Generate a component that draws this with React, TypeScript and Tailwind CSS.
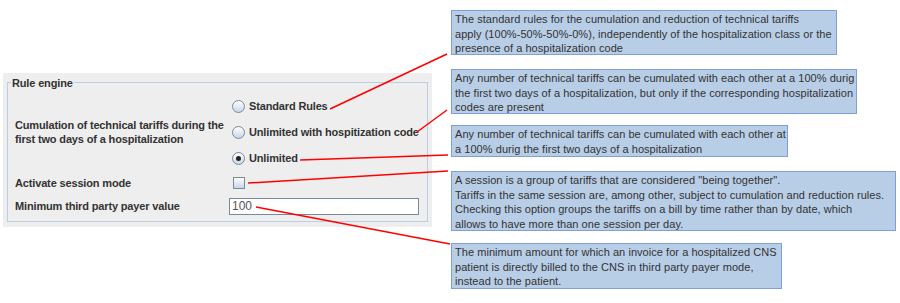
import React from "react";

const callouts = [
  {
    width: "w-[386px]",
    height: "h-[45px]",
    margin: "mt-0",
    lines: [
      "The standard rules for the cumulation and reduction of technical tariffs",
      "apply (100%-50%-50%-0%), independently of the hospitalization class or the",
      "presence of a hospitalization code",
    ],
  },
  {
    width: "w-[406px]",
    height: "h-[45px]",
    margin: "mt-[14px]",
    lines: [
      "Any number of technical tariffs can be cumulated with each other at a 100% durig",
      "the first two days of a hospitalization, but only if the corresponding hospitalization",
      "codes are present",
    ],
  },
  {
    width: "w-[337px]",
    height: "h-[32px]",
    margin: "mt-[11px]",
    lines: [
      "Any number of technical tariffs can be cumulated with each other at",
      "a 100% durig the first two days of a hospitalization",
    ],
  },
  {
    width: "w-[445px]",
    height: "h-[60px]",
    margin: "mt-[14px]",
    lines: [
      'A session is a group of tariffs that are considered "being together".',
      "Tariffs in the same session are, among other, subject to cumulation and reduction rules.",
      "Checking this option groups the tariffs on a bill by time rather than by date, which",
      "allows to have more than one session per day.",
    ],
  },
  {
    width: "w-[331px]",
    height: "h-[46px]",
    margin: "mt-[12px]",
    lines: [
      "The minimum amount for which an invoice for a hospitalized CNS",
      "patient is directly billed to the CNS in third party payer mode,",
      "instead to the patient.",
    ],
  },
];

function Radio({ checked, label }: { checked?: boolean; label: string }) {
  return (
    <div className="flex h-[26px] items-center">
      <span className="ml-[3px] flex h-[13px] w-[13px] items-center justify-center rounded-full border border-[#7a8a99] bg-gradient-to-b from-white to-[#c8d6e6]">
        {checked && <span className="h-[5px] w-[5px] rounded-full bg-[#222]" />}
      </span>
      <span className="ml-[4px] font-bold">{label}</span>
    </div>
  );
}

export default function App() {
  return (
    <div
      className="relative h-[303px] w-[900px] overflow-hidden bg-white text-[11px] leading-[14px] tracking-[-0.15px] text-[#333]"
      style={{ fontFamily: '"Liberation Sans", Arial, sans-serif' }}
    >
      <div className="flex">
        {/* left panel */}
        <div className="ml-[3px] mt-[73px] h-[154px] w-[429px] bg-[#eeeeee] px-[4px] pt-[9px]">
          <div className="relative h-[140px] border border-[#b8cfe5] pl-[7px] pr-[8px]">
            <span className="absolute -top-[7px] left-[3px] bg-[#eeeeee] px-[1px] font-bold">Rule engine</span>
            <div className="grid grid-cols-[214px_1fr] pt-[10px]">
              <div className="flex items-center font-bold">
                Cumulation of technical tariffs during the
                <br />
                first two days of a hospitalization
              </div>
              <div className="flex flex-col">
                <Radio label="Standard Rules" />
                <Radio label="Unlimited with hospitization code" />
                <Radio checked label="Unlimited" />
              </div>
              <div className="flex h-[24px] items-center font-bold">Activate session mode</div>
              <div className="flex h-[24px] items-center">
                <span className="ml-[4px] h-[12px] w-[12px] border border-[#7a8a99] bg-gradient-to-b from-white to-[#c8d6e6]" />
              </div>
              <div className="flex h-[22px] items-center font-bold">Minimum third party payer value</div>
              <div className="flex h-[22px] items-center">
                <div className="flex h-[17px] w-[190px] items-center border border-[#7a8a99] bg-white pl-[2px] text-[12px] tracking-normal text-[#555]">
                  100
                </div>
              </div>
            </div>
          </div>
        </div>

        {/* callouts */}
        <div className="ml-[19px] mt-[10px] flex flex-col">
          {callouts.map((c, i) => (
            <div
              key={i}
              className={`${c.width} ${c.height} ${c.margin} border border-[#7f9fd6] bg-[#b8cde6] px-[3px] pt-[1px] leading-[14.5px] tracking-[0.05px] whitespace-nowrap`}
            >
              {c.lines.map((l, j) => (
                <div key={j}>{l}</div>
              ))}
            </div>
          ))}
        </div>
      </div>

      <svg className="pointer-events-none absolute left-0 top-0" width="900" height="303">
        <g stroke="#ff0000" strokeWidth="1.5" fill="none">
          <line x1="330" y1="109" x2="447" y2="54" />
          <line x1="417" y1="132" x2="447" y2="110" />
          <line x1="300" y1="160" x2="448" y2="155" />
          <line x1="248" y1="183" x2="448" y2="171" />
          <line x1="256" y1="207" x2="450" y2="244" />
        </g>
      </svg>
    </div>
  );
}
